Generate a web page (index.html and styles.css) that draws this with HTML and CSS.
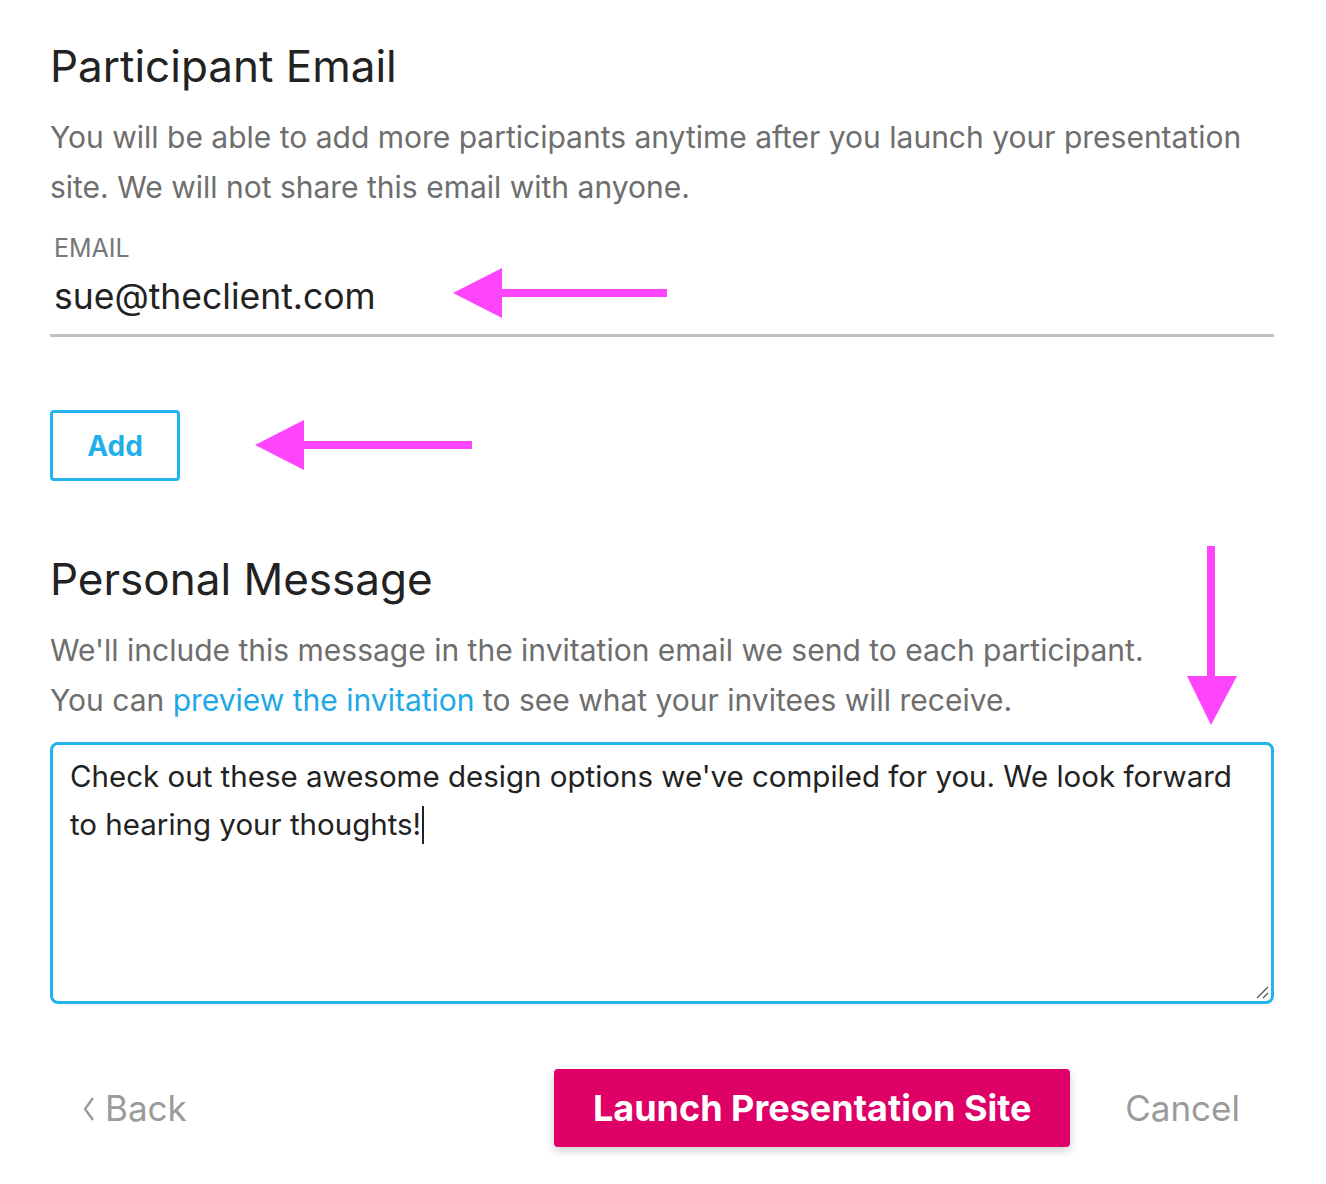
FILE: index.html
```html
<!DOCTYPE html>
<html lang="en">
<head>
    <meta charset="UTF-8">
    <meta name="viewport" content="width=device-width, initial-scale=1.0">
    <title>Invite Participants</title>
    <link rel="stylesheet" href="styles.css">
</head>
<body>
    <div class="invite-form">
        <section class="form-section">
            <h2>Participant Email</h2>
            <p class="hint">You will be able to add more participants anytime after you launch your presentation site. We will not share this email with anyone.</p>

            <div class="email-field">
                <label class="field-label">EMAIL</label>
                <div class="field-value">sue@theclient.com</div>
            </div>

            <button class="btn-outline">Add</button>
        </section>

        <section class="form-section">
            <h2 class="section-title">Personal Message</h2>
            <p class="hint">We'll include this message in the invitation email we send to each participant.<br>You can <a href="#">preview the invitation</a> to see what your invitees will receive.</p>

            <div class="message-box">Check out these awesome design options we've compiled for you. We look forward to hearing your thoughts!<span class="caret"></span>
                <svg class="grip" width="14" height="14" viewBox="0 0 14 14">
                    <line x1="2" y1="13" x2="13" y2="2" stroke="#555" stroke-width="1.3"/>
                    <line x1="8" y1="13" x2="13" y2="8" stroke="#555" stroke-width="1.3"/>
                </svg>
            </div>
        </section>

        <div class="form-actions">
            <a href="#" class="link-back">
                <svg class="chevron" width="14" height="26" viewBox="0 0 14 26">
                    <polyline points="11,2 3,13 11,24" fill="none" stroke="#9b9b9b" stroke-width="2.4"/>
                </svg>
                Back
            </a>
            <div class="action-group">
                <button class="btn-primary">Launch Presentation Site</button>
                <a href="#" class="link-cancel">Cancel</a>
            </div>
        </div>

        <!-- annotation arrows -->
        <svg class="annotations" width="1326" height="1184" viewBox="0 0 1326 1184">
            <rect x="500" y="289" width="167" height="8" fill="#ff45fb"/>
            <polygon points="453,293 502,268 502,318" fill="#ff45fb"/>
            <rect x="301" y="441" width="171" height="8" fill="#ff45fb"/>
            <polygon points="255,445 304,420 304,470" fill="#ff45fb"/>
            <rect x="1207" y="546" width="8" height="132" fill="#ff45fb"/>
            <polygon points="1187,676 1237,676 1211,725" fill="#ff45fb"/>
        </svg>
    </div>
</body>
</html>
```

FILE: styles.css
```css
* {
    margin: 0;
    padding: 0;
    box-sizing: border-box;
}

body {
    font-family: Inter, "Open Sans", sans-serif;
    color: #222;
    background-color: #fff;
}

.invite-form {
    position: relative;
    width: 1326px;
    min-height: 1184px;
    padding: 38px 52px 0 50px;
}

.form-section h2 {
    font-size: 44px;
    font-weight: 400;
    line-height: 56px;
    color: #222;
}

.section-title {
    margin-top: 70px;
}

.hint {
    margin-top: 18px;
    font-size: 30px;
    line-height: 50px;
    color: #6e6e6e;
}

.hint a {
    color: #1ea8e6;
    text-decoration: none;
}

/* Email input */
.email-field {
    margin-top: 21px;
    border-bottom: 3px solid #c0c0c0;
    padding: 0 4px 15px;
}

.field-label {
    display: block;
    font-size: 25px;
    line-height: 30px;
    color: #777;
}

.field-value {
    margin-top: 12px;
    font-size: 35.5px;
    line-height: 44px;
    color: #222;
}

.btn-outline {
    margin-top: 73px;
    width: 130px;
    height: 71px;
    font-family: inherit;
    font-size: 28px;
    font-weight: 700;
    color: #1fb0ec;
    background: #fff;
    border: 3px solid #22b3ee;
    border-radius: 4px;
}

/* Message textarea */
.message-box {
    position: relative;
    margin-top: 17px;
    height: 262px;
    padding: 7px 17px;
    font-size: 29.5px;
    line-height: 48px;
    color: #222;
    border: 3px solid #22b3ee;
    border-radius: 8px;
}

.caret {
    display: inline-block;
    width: 2px;
    height: 38px;
    margin-left: 1px;
    vertical-align: -9px;
    background: #222;
}

.grip {
    position: absolute;
    right: 2px;
    bottom: 2px;
}

/* Footer actions */
.form-actions {
    display: flex;
    align-items: center;
    margin-top: 65px;
    padding: 0 34px 0 32px;
}

.link-back,
.link-cancel {
    font-size: 35px;
    color: #9b9b9b;
    text-decoration: none;
}

.link-back {
    display: flex;
    align-items: center;
    gap: 9px;
}

.chevron {
    margin-top: 2px;
}

.action-group {
    display: flex;
    align-items: center;
    gap: 55px;
    margin-left: auto;
}

.btn-primary {
    width: 516px;
    height: 78px;
    font-family: inherit;
    font-size: 36px;
    font-weight: 700;
    color: #fff;
    background-color: #de0067;
    border: none;
    border-radius: 4px;
    box-shadow: 0 4px 10px rgba(0, 0, 0, 0.18);
}

.annotations {
    position: absolute;
    top: 0;
    left: 0;
    pointer-events: none;
}
```
